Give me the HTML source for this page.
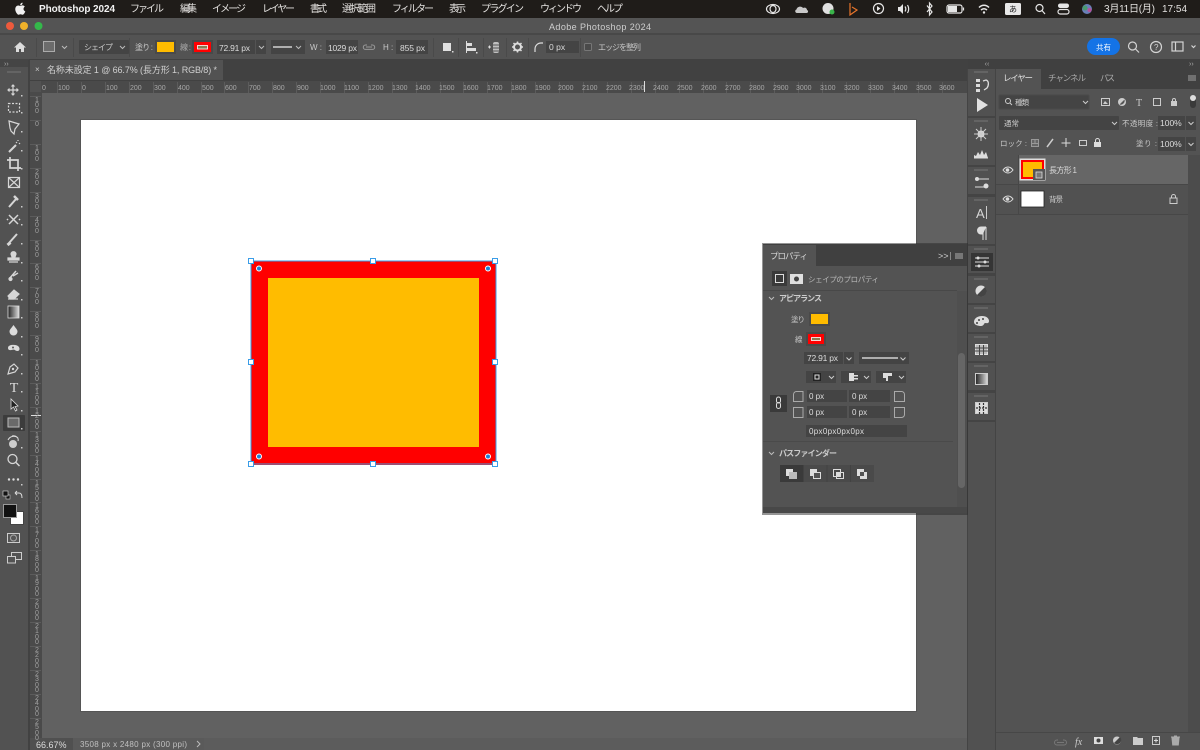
<!DOCTYPE html>
<html lang="ja"><head><meta charset="utf-8"><title>Adobe Photoshop 2024</title>
<style>
html,body{margin:0;padding:0;background:#535353}
body{width:1200px;height:750px;overflow:hidden;position:relative}
svg{position:absolute;left:0;top:0;display:block;filter:blur(.3px)}
text{font-family:"Liberation Sans","Noto Sans CJK JP",sans-serif;fill:#c8c8c8;font-size:8px}
.m text{fill:#e4e2e0;font-size:10px}
.r text{font-size:7px;fill:#a8a8a8}
.v{position:absolute;left:33px;width:8px;font:7px/5.4px "Liberation Sans",sans-serif;color:#a0a0a0;text-align:center;filter:blur(.3px)}
</style></head><body>
<svg width="1200" height="750" viewBox="0 0 1200 750" xmlns="http://www.w3.org/2000/svg">
<!-- base -->
<rect width="1200" height="750" fill="#535353"/>
<rect y="0" width="1200" height="18" fill="#1f1c19"/>
<rect y="18" width="1200" height="16" fill="#545454"/>
<rect y="33" width="1200" height="2" fill="#484848"/>
<rect y="35" width="1200" height="24" fill="#535353"/>
<rect y="59" width="968" height="22" fill="#414141"/>
<rect y="59" x="968" width="232" height="10" fill="#404040"/>
<rect x="0" y="59" width="29" height="8" fill="#454545"/>
<rect x="0" y="67" width="28" height="683" fill="#525252"/>
<rect x="7" y="71" width="14" height="2" fill="#646464"/>
<rect x="28" y="60" width="2" height="690" fill="#424242"/>
<!-- tab -->
<rect x="30" y="60" width="193" height="20" fill="#525252"/>
<text x="35" y="72" style="font-size:8px" fill="#aaa">×</text>
<text x="47" y="73" textLength="170" style="font-size:9px;fill:#d0d0d0">名称未設定 1 @ 66.7% (長方形 1, RGB/8) *</text>
<!-- rulers & canvas -->
<rect x="30" y="81" width="938" height="12" fill="#4a4a4a"/>
<rect x="30" y="81" width="12" height="657" fill="#4a4a4a"/>
<rect x="42" y="93" width="926" height="645" fill="#616161"/>
<rect x="30" y="81" width="11" height="11" fill="#525252"/>
<g stroke="#5c5c5c" stroke-width="1">
<path d="M57.5 82v11M81.5 82v11M105.5 82v11M129.5 82v11M153.5 82v11M177.5 82v11M201.5 82v11M224.5 82v11M248.5 82v11M272.5 82v11M296.5 82v11M320.5 82v11M344.5 82v11M368.5 82v11M392.5 82v11M416.5 82v11M440.5 82v11M463.5 82v11M487.5 82v11M511.5 82v11M535.5 82v11M559.5 82v11M583.5 82v11M607.5 82v11M631.5 82v11M655.5 82v11M679.5 82v11M703.5 82v11M726.5 82v11M750.5 82v11M774.5 82v11M798.5 82v11M822.5 82v11M846.5 82v11M870.5 82v11M894.5 82v11M918.5 82v11M942.5 82v11"/>
<path d="M30 96.5h11M30 120.5h11M30 144.5h11M30 168.5h11M30 192.5h11M30 216.5h11M30 240.5h11M30 263.5h11M30 287.5h11M30 311.5h11M30 335.5h11M30 359.5h11M30 383.5h11M30 407.5h11M30 431.5h11M30 455.5h11M30 479.5h11M30 502.5h11M30 526.5h11M30 550.5h11M30 574.5h11M30 598.5h11M30 622.5h11M30 646.5h11M30 670.5h11M30 694.5h11M30 718.5h11"/>
</g>
<g class="r">
<text x="42" y="90">0</text><text x="58" y="90">100</text><text x="82" y="90">0</text><text x="106" y="90">100</text><text x="130" y="90">200</text><text x="154" y="90">300</text><text x="178" y="90">400</text><text x="202" y="90">500</text><text x="225" y="90">600</text><text x="249" y="90">700</text><text x="273" y="90">800</text><text x="297" y="90">900</text><text x="320" y="90">1000</text><text x="344" y="90">1100</text><text x="368" y="90">1200</text><text x="392" y="90">1300</text><text x="415" y="90">1400</text><text x="439" y="90">1500</text><text x="463" y="90">1600</text><text x="487" y="90">1700</text><text x="511" y="90">1800</text><text x="535" y="90">1900</text><text x="558" y="90">2000</text><text x="582" y="90">2100</text><text x="606" y="90">2200</text><text x="629" y="90">2300</text><text x="653" y="90">2400</text><text x="677" y="90">2500</text><text x="701" y="90">2600</text><text x="725" y="90">2700</text><text x="749" y="90">2800</text><text x="773" y="90">2900</text><text x="796" y="90">3000</text><text x="820" y="90">3100</text><text x="844" y="90">3200</text><text x="868" y="90">3300</text><text x="892" y="90">3400</text><text x="916" y="90">3500</text><text x="939" y="90">3600</text>
</g>
<path d="M644.5 81v11" stroke="#ddd"/>
<path d="M31 415.5h10" stroke="#ddd"/>
<!-- document -->
<rect x="80" y="119" width="837" height="593" fill="#3f3f3f" opacity=".35"/>
<rect x="81" y="120" width="835" height="591" fill="#fff"/>
<rect x="251" y="261" width="245" height="204" fill="#ff0000"/>
<rect x="268" y="278" width="211" height="169" fill="#ffbc00"/>
<rect x="251" y="261" width="245" height="203" fill="none" stroke="#3a9de8" stroke-width="1"/>
<g fill="#fff" stroke="#3a9de8" stroke-width="1">
<rect x="248.500" y="258.500" width="5" height="5"/><rect x="370.500" y="258.500" width="5" height="5"/><rect x="492.500" y="258.500" width="5" height="5"/>
<rect x="248.500" y="359.500" width="5" height="5"/><rect x="492.500" y="359.500" width="5" height="5"/>
<rect x="248.500" y="461.500" width="5" height="5"/><rect x="370.500" y="461.500" width="5" height="5"/><rect x="492.500" y="461.500" width="5" height="5"/>
</g>
<g fill="#1c7fd8" stroke="#fff" stroke-width="1"><circle cx="259" cy="268.500" r="2.500"/><circle cx="488" cy="268.500" r="2.500"/><circle cx="259" cy="456.500" r="2.500"/><circle cx="488" cy="456.500" r="2.500"/></g>
<!-- status -->
<rect x="30" y="738" width="938" height="12" fill="#5c5c5c"/>
<rect x="30" y="738" width="43" height="12" fill="#505050"/>
<rect x="73" y="738" width="131" height="12" fill="#5a5a5a"/>
<text x="36" y="748" style="font-size:9px;fill:#dcdcdc">66.67%</text>
<text x="80" y="747" style="font-size:8px;fill:#c0c0c0" textLength="107">3508 px x 2480 px (300 ppi)</text>
<path d="M197 741l3 3-3 3" stroke="#bbb" fill="none"/>
<!-- menu bar -->
<path d="M23.500 8.900c0-1.500 1.200-2.200 1.300-2.300-.7-1-1.800-1.200-2.200-1.200-.9-.1-1.800.6-2.300.6s-1.200-.6-2-.5c-1 0-2 .6-2.500 1.500-1.100 1.900-.3 4.600.8 6.100.5.700 1.100 1.600 1.900 1.600s1.100-.5 2-.5 1.200.5 2 .5 1.400-.8 1.900-1.500c.6-.9.900-1.700.9-1.800-.1 0-1.800-.7-1.800-2.500zM22 4.500c.4-.5.700-1.200.6-1.900-.6 0-1.300.4-1.800.9-.4.400-.7 1.100-.6 1.800.7.100 1.400-.3 1.800-.8z" fill="#f0f0f0"/>
<g class="m">
<text x="39" y="12" style="font-weight:bold;font-size:10px;fill:#f2f2f2" textLength="76">Photoshop 2024</text>
<text x="130" y="12" textLength="34">ファイル</text>
<text x="180" y="12" textLength="17">編集</text>
<text x="212" y="12" textLength="34">イメージ</text>
<text x="262" y="12" textLength="33">レイヤー</text>
<text x="310" y="12" textLength="17">書式</text>
<text x="342" y="12" textLength="34">選択範囲</text>
<text x="392" y="12" textLength="42">フィルター</text>
<text x="449" y="12" textLength="17">表示</text>
<text x="481" y="12" textLength="43">プラグイン</text>
<text x="540" y="12" textLength="42">ウィンドウ</text>
<text x="597" y="12" textLength="26">ヘルプ</text>
<text x="1104" y="12" textLength="51">3月11日(月)</text>
<text x="1162" y="12" textLength="25">17:54</text>
</g>
<!-- status icons -->
<g fill="none" stroke="#e6e6e6" stroke-width="1.200">
<ellipse cx="773" cy="9" rx="6.500" ry="4.500"/><ellipse cx="773" cy="9" rx="3" ry="3.500"/>
<path d="M797 13c-2 0-2.500-3-.5-3.500.3-3 5-4 6.500-1.500 2-1 4 .3 4 2 1.500.5 1.500 3-.5 3z" fill="#c8c8c8" stroke="none"/>
<circle cx="828" cy="8.500" r="5.500" fill="#e0e0e0" stroke="none"/><circle cx="832" cy="12" r="2.500" fill="#3ab54a" stroke="none"/>
<path d="M850 3v12l7-5-5-3" stroke="#e8742a"/>
<circle cx="878.500" cy="8.500" r="5"/><path d="M877 6v5l3.500-2.500z" fill="#e6e6e6" stroke="none"/>
<path d="M898 7h2l3-3v10l-3-3h-2z" fill="#e6e6e6" stroke="none"/><path d="M905 6.500c1 1.500 1 3.500 0 5M907.500 5c1.500 2.500 1.500 5.500 0 8"/>
<path d="M927 5.500l5 6.500-2.500 3V3l2.500 3-5 6"/>
<rect x="947" y="5" width="15" height="8" rx="2"/><rect x="948" y="6" width="9" height="6" fill="#e6e6e6" stroke="none"/><path d="M963.500 7.500v3"/>
<path d="M979 7.500c3-3 7-3 10 0M981 10c2-1.700 4-1.700 6 0" stroke-width="1.500"/><circle cx="984" cy="12.500" r="1.200" fill="#e6e6e6" stroke="none"/>
<circle cx="1039.500" cy="8" r="3.500"/><path d="M1042 10.500l3 3.500"/>
<rect x="1058" y="3.500" width="11" height="4.500" rx="2.200" fill="#e6e6e6" stroke="none"/><rect x="1058" y="9.500" width="11" height="4.500" rx="2.200"/>
</g>
<rect x="1005" y="3" width="16" height="12" rx="1.500" fill="#e8e8e8"/>
<text x="1009" y="12" style="font-size:8px;fill:#222">あ</text>
<circle cx="1087" cy="9" r="5" fill="#6a7fb8"/><circle cx="1085" cy="8" r="2.500" fill="#4a9a70"/><circle cx="1089.500" cy="10" r="2" fill="#b8509a"/>
<!-- window -->
<circle cx="10" cy="26" r="4" fill="#ee5a3c"/><circle cx="24" cy="26" r="4" fill="#f0b22a"/><circle cx="38.500" cy="26" r="4" fill="#34b84a"/>
<text x="549" y="30" style="font-size:9px;fill:#cfcfcf" textLength="102">Adobe Photoshop 2024</text>
<!-- options bar -->
<path d="M36.500 38v19M73.500 38v19M129.500 38v19M433.500 38v19M458.500 38v19M483.500 38v19M506.500 38v19M528.500 38v19M580.500 38v19" stroke="#4a4a4a"/>
<path d="M14 47.500l6-5.500 6 5.500h-2v4.500h-3v-3h-2v3h-3v-4.500z" fill="#dcdcdc"/>
<rect x="43.500" y="41.500" width="11" height="10" fill="#6c6c6c" stroke="#ababab"/><path d="M62 46l2.500 2.500L67 46" stroke="#bbb" fill="none"/>
<rect x="79" y="40" width="50" height="14" rx="1" fill="#444"/><text x="84" y="50" textLength="29" style="font-size:8px">シェイプ</text><path d="M120 46l2.500 2.500L125 46" stroke="#bbb" fill="none"/>
<text x="135" y="50" textLength="18" style="font-size:8px">塗り :</text>
<rect x="155" y="40" width="21" height="14" fill="#494949"/><rect x="157" y="42" width="17" height="10" fill="#ffbc00"/>
<text x="180" y="50" textLength="11" style="font-size:8px;fill:#aaa">線 :</text>
<rect x="192" y="40" width="21" height="14" fill="#494949"/><rect x="194" y="42" width="17" height="10" fill="#f00"/><rect x="197.500" y="45.500" width="10" height="3.500" fill="#8a7a50" stroke="#fff" stroke-width=".8"/>
<rect x="217" y="40" width="38" height="14" fill="#444"/><rect x="256" y="40" width="10" height="14" fill="#444"/><text x="219" y="51" textLength="31" style="font-size:8.500px;fill:#dcdcdc">72.91 px</text><path d="M259 46l2.500 2.500 2.500-2.500" stroke="#bbb" fill="none"/>
<rect x="271" y="40" width="34" height="14" fill="#444"/><path d="M273 47h19" stroke="#eee" stroke-width="1.300"/><path d="M296 46l2.500 2.500 2.500-2.500" stroke="#bbb" fill="none"/>
<text x="310" y="50" style="font-size:8px">W :</text>
<rect x="326" y="40" width="32" height="14" fill="#444"/><text x="328" y="51" textLength="29" style="font-size:8.500px;fill:#dcdcdc">1029 px</text>
<path d="M367 45h-1.500a2.200 2.200 0 000 4.400H369M371 45h1.500a2.200 2.200 0 010 4.400H369M366 47h6" stroke="#999" fill="none"/>
<text x="383" y="50" style="font-size:8px">H :</text>
<rect x="396" y="40" width="32" height="14" fill="#444"/><text x="400" y="51" textLength="25" style="font-size:8.500px;fill:#dcdcdc">855 px</text>
<rect x="443" y="43" width="8" height="8" fill="#e0e0e0"/><rect x="452" y="51" width="1.500" height="1.500" fill="#ddd"/>
<path d="M466.500 41v12" stroke="#ddd"/><rect x="467" y="43" width="5" height="3" fill="#ddd"/><rect x="467" y="48" width="9" height="3" fill="#ddd"/><rect x="476" y="52" width="1.500" height="1.500" fill="#ddd"/>
<path d="M488 47h3M489.500 45.500v3" stroke="#ddd"/><rect x="493" y="42" width="6" height="11" rx="2" fill="#c0c0c0"/><path d="M492 45h8M492 48h8M492 51h8" stroke="#555"/>
<circle cx="517.500" cy="47" r="3.500" fill="none" stroke="#ddd" stroke-width="2"/><path d="M517.500 41.500v2M517.500 50.500v2M512 47h2M521 47h2M513.500 43l1.500 1.500M520 49.500l1.500 1.500M521.500 43L520 44.500M515 49.500L513.500 51" stroke="#ddd" stroke-width="1.500"/>
<path d="M535 52v-3a6 6 0 016-6h2" stroke="#ddd" fill="none" stroke-width="1.200"/>
<rect x="546" y="41" width="33" height="12" fill="#444"/><text x="549" y="50" style="font-size:8.500px;fill:#dcdcdc">0 px</text>
<rect x="584.500" y="43.500" width="7" height="7" rx="1" fill="#4a4a4a" stroke="#777"/>
<text x="598" y="50" textLength="43" style="font-size:8px">エッジを整列</text>
<rect x="1087" y="38" width="33" height="17" rx="8.500" fill="#1473e6"/>
<text x="1096" y="50" textLength="15" style="font-size:7.500px;fill:#fff">共有</text>
<g fill="none" stroke="#d4d4d4" stroke-width="1.200"><circle cx="1132.500" cy="46" r="4"/><path d="M1135.500 49l3.500 3.500"/><circle cx="1156" cy="47" r="5.500"/><rect x="1172" y="42" width="11" height="9"/><path d="M1175.500 42v9M1191.500 45.500l2 2 2-2"/></g>
<text x="1154" y="50" style="font-size:8px;fill:#d4d4d4">?</text>
<!-- collapse arrows -->
<text x="4" y="66" style="font-size:7px;fill:#aaa">››</text><text x="987" y="66" style="font-size:7px;fill:#aaa" text-anchor="middle">‹‹</text><text x="1189" y="66" style="font-size:7px;fill:#aaa">››</text>
<!-- left tools -->
<g fill="none" stroke="#d6d6d6" stroke-width="1.200">
<path d="M13 85v10M8 90h10M11.500 86.500l1.500-1.500 1.500 1.500M11.500 93.500l1.500 1.500 1.500-1.500M9.500 88.500L8 90l1.500 1.500M16.500 88.500L18 90l-1.500 1.500"/>
<rect x="8.500" y="103.500" width="11" height="8.500" stroke-dasharray="2 1.500"/>
<path d="M9 121l10 3-4 5-1 5-3-3-1-3z"/>
<path d="M9 152l7-7" stroke-width="2"/><path d="M16 142l1 1M19 144l1-1M18 140v1"/>
<path d="M10 157v11h11M7 160h11v11" stroke-width="1.700"/>
<rect x="8.500" y="177.500" width="11" height="10"/><path d="M8.500 177.500l11 10M19.500 177.500l-11 10"/>
<path d="M9 207l7-8" stroke-width="2"/><path d="M14 196l4 4" stroke-width="2.500"/>
<path d="M9 215l9 9M18 215l-9 9M8 220l-1-1M19 220l1-1" stroke-width="1.500"/>
<path d="M9 243l8-9" stroke-width="2"/><path d="M7.500 245l3-2.500" stroke-width="3"/>
<path d="M11 254c0-3 5-3 5 0l-1 3h-3zM8 258h11v2H8zM9 262h9" fill="#d6d6d6"/>
<path d="M9 279l7-8M13 276l5-3" stroke-width="1.500"/><circle cx="10.500" cy="279" r="1.500" fill="#d6d6d6"/>
<path d="M8 296l6-6 5 4-5 5H10z" fill="#d6d6d6"/><path d="M8 299h10"/>
</g>
<defs><linearGradient id="g" x1="0" x2="1" y1="0" y2="0"><stop offset="0" stop-color="#222"/><stop offset="1" stop-color="#ddd"/></linearGradient></defs>
<rect x="8" y="306" width="11" height="12" fill="url(#g)" stroke="#ddd" stroke-width=".8"/>
<path d="M13.500 325c2 3 4 4.500 4 6.500a4 4 0 01-8 0c0-2 2-3.500 4-6.500z" fill="#dcdcdc"/>
<path d="M8 348c0-3 4-3.500 7-3 3 .3 4.500 2 4.500 4 0 2-2 2.500-4 1.500-1-1-2-1-4-.5s-3.500 0-3.500-2z" fill="#dcdcdc"/><circle cx="13" cy="347.500" r="1" fill="#555"/>
<path d="M8 374l2-7 4-3 4 4-3 4z" fill="none" stroke="#d6d6d6" stroke-width="1.200"/><circle cx="13" cy="369" r="1.200" fill="#d6d6d6"/>
<text x="14" y="392" text-anchor="middle" style="font-family:'Liberation Serif',serif;font-size:14px;fill:#dcdcdc">T</text>
<path d="M11 399v10l2.500-2 2 4 1.500-1-2-3.500 3-.5z" fill="#222" stroke="#ddd" stroke-width=".8"/>
<rect x="3" y="415" width="22" height="16" rx="1" fill="#3c3c3c"/><rect x="8" y="418" width="11" height="9" fill="#6a6a6a" stroke="#bbb"/>
<circle cx="13" cy="444" r="4" fill="#ccc"/><path d="M8 440c2-4 7-5 10-2M12 436c4-1 7 2 6 5" stroke="#ddd" fill="none"/>
<circle cx="12.500" cy="459" r="4.500" fill="none" stroke="#d6d6d6" stroke-width="1.300"/><path d="M16 462.500l3.500 3.500" stroke="#d6d6d6" stroke-width="1.500"/>
<circle cx="9" cy="479.500" r="1.200" fill="#ddd"/><circle cx="13.500" cy="479.500" r="1.200" fill="#ddd"/><circle cx="18" cy="479.500" r="1.200" fill="#ddd"/>
<g fill="#ccc"><rect x="21" y="95" width="1.500" height="1.500"/><rect x="21" y="112" width="1.500" height="1.500"/><rect x="21" y="131" width="1.500" height="1.500"/><rect x="21" y="150" width="1.500" height="1.500"/><rect x="21" y="168" width="1.500" height="1.500"/><rect x="21" y="206" width="1.500" height="1.500"/><rect x="21" y="224" width="1.500" height="1.500"/><rect x="21" y="243" width="1.500" height="1.500"/><rect x="21" y="262" width="1.500" height="1.500"/><rect x="21" y="280" width="1.500" height="1.500"/><rect x="21" y="299" width="1.500" height="1.500"/><rect x="21" y="317" width="1.500" height="1.500"/><rect x="21" y="336" width="1.500" height="1.500"/><rect x="21" y="354" width="1.500" height="1.500"/><rect x="21" y="373" width="1.500" height="1.500"/><rect x="21" y="391" width="1.500" height="1.500"/><rect x="21" y="410" width="1.500" height="1.500"/><rect x="21" y="428" width="1.500" height="1.500"/><rect x="21" y="447" width="1.500" height="1.500"/><rect x="21" y="484" width="1.500" height="1.500"/></g>
<!-- colours -->
<rect x="6" y="495" width="4" height="4" fill="#111" stroke="#ccc" stroke-width=".6"/><rect x="3" y="491" width="5" height="5" fill="#111" stroke="#ddd" stroke-width=".6"/>
<path d="M16 493l3 0c2 0 3 2 3 5M15 493l2-2M15 493l2 2" stroke="#ddd" fill="none"/>
<rect x="10.500" y="511.500" width="13" height="13" fill="#fff" stroke="#444"/>
<rect x="3.500" y="504.500" width="13" height="13" fill="#111" stroke="#999"/>
<rect x="7.500" y="533.500" width="12" height="9" fill="#555" stroke="#ccc"/><ellipse cx="13.500" cy="538" rx="3" ry="3" fill="none" stroke="#aaa"/>
<rect x="11.500" y="552.500" width="10" height="7" fill="#535353" stroke="#ccc"/><rect x="7.500" y="556.500" width="8" height="6.500" fill="#535353" stroke="#ccc"/>
<!-- right icon strip -->
<rect x="967" y="69" width="29" height="681" fill="#444"/>
<g fill="#515151">
<rect x="968" y="69" width="27" height="47"/><rect x="968" y="118" width="27" height="47"/><rect x="968" y="167" width="27" height="27"/><rect x="968" y="197" width="27" height="47"/><rect x="968" y="246" width="27" height="27"/><rect x="968" y="276" width="27" height="27"/><rect x="968" y="305" width="27" height="27"/><rect x="968" y="334" width="27" height="27"/><rect x="968" y="363" width="27" height="27"/><rect x="968" y="393" width="27" height="27"/><rect x="968" y="422" width="27" height="328"/>
</g>
<g fill="#646464"><rect x="974" y="71" width="14" height="2"/><rect x="974" y="120" width="14" height="2"/><rect x="974" y="169" width="14" height="2"/><rect x="974" y="199" width="14" height="2"/><rect x="974" y="248" width="14" height="2"/><rect x="974" y="278" width="14" height="2"/><rect x="974" y="307" width="14" height="2"/><rect x="974" y="336" width="14" height="2"/><rect x="974" y="365" width="14" height="2"/><rect x="974" y="395" width="14" height="2"/></g>
<g fill="#dcdcdc"><rect x="976" y="79" width="4" height="3"/><rect x="976" y="84" width="4" height="3"/><rect x="976" y="89" width="4" height="3"/></g>
<path d="M983 81l3-1c3 1 3 5 1 8l-3 2" stroke="#ddd" fill="none" stroke-width="1.300"/>
<path d="M977 98l11 7-11 7z" fill="#e2e2e2"/>
<circle cx="981" cy="134" r="3.500" fill="#ddd"/><path d="M981 127v14M974 134h14M976 129l10 10M986 129l-10 10" stroke="#ccc" fill="none"/>
<path d="M974 158v-3l2 1 2-4 2 3 2-5 2 5 2-3 2 6z" fill="#ddd"/><path d="M974 158h14" stroke="#ddd"/>
<path d="M975 179h14M975 187h9" stroke="#ddd" fill="none"/><circle cx="977" cy="179" r="2" fill="#ddd"/><circle cx="986" cy="186" r="2.500" fill="#ddd"/>
<text x="976" y="218" style="font-size:13px;fill:#d6d6d6">A</text><path d="M986.500 206v13" stroke="#ccc"/>
<path d="M983 227v13M986 227v13M986 227h-5a3 3 0 000 7h2" stroke="#ddd" fill="#ddd"/>
<rect x="971" y="253" width="22" height="18" fill="#353535"/>
<g stroke="#ddd" fill="none"><path d="M975 258h14M975 262h14M975 266h14"/></g><circle cx="978" cy="258" r="1.500" fill="#ddd"/><circle cx="985" cy="262" r="1.500" fill="#ddd"/><circle cx="979" cy="266" r="1.500" fill="#ddd"/>
<circle cx="981" cy="291" r="5.500" fill="#ddd"/><path d="M977 295l8-8a5.500 5.500 0 01-8 8z" fill="#444"/>
<path d="M974 322c0-4 4-6 8-6s7 2 7 5-3 2-4 2-1 3-4 3-7-1-7-4z" fill="#ddd"/><circle cx="979" cy="320" r="1" fill="#444"/><circle cx="983" cy="319" r="1" fill="#444"/><circle cx="977" cy="323" r="1" fill="#444"/>
<rect x="975.500" y="344.500" width="12" height="10" fill="#bbb" stroke="#ddd"/><path d="M975 348h13M975 351h13M979.500 345v10M983.500 345v10" stroke="#444" fill="none"/>
<rect x="975.500" y="373.500" width="12" height="11" fill="url(#g)" stroke="#ccc"/>
<rect x="975.500" y="402.500" width="12" height="11" fill="#ddd" stroke="#ccc"/><path d="M979.500 403v11M983.500 403v11M976 408h11" stroke="#333" stroke-width="1.200" stroke-dasharray="2 1" fill="none"/>
<!-- layers panel -->
<rect x="996" y="69" width="204" height="20" fill="#404040"/>
<rect x="996" y="69" width="45" height="20" fill="#535353"/>
<text x="1003" y="81" textLength="30" style="font-size:8.500px;fill:#e0e0e0">レイヤー</text>
<text x="1048" y="81" textLength="38" style="font-size:8.500px;fill:#a8a8a8">チャンネル</text>
<text x="1100" y="81" textLength="15" style="font-size:8.500px;fill:#a8a8a8">パス</text>
<rect x="1188" y="75" width="8" height="6" fill="#707070"/>
<rect x="999" y="95" width="90" height="14" rx="1" fill="#444" stroke="#4a4a4a"/>
<circle cx="1008" cy="101" r="2.500" fill="none" stroke="#ccc"/><path d="M1010 103l2 2M1083 101l2.500 2.500 2.500-2.500" stroke="#ccc" fill="none"/>
<text x="1015" y="105" textLength="14" style="font-size:7.500px;fill:#ccc">種類</text>
<rect x="1101.500" y="98.500" width="8" height="7" fill="none" stroke="#ccc"/><path d="M1103 104l2-3 3 3" fill="#ccc"/>
<circle cx="1122" cy="102" r="4" fill="#ccc"/><path d="M1119.500 104.500l5-5a4 4 0 01-5 5z" fill="#555"/>
<text x="1139" y="106" text-anchor="middle" style="font-size:10px;font-family:'Liberation Serif',serif;fill:#ccc">T</text>
<rect x="1153.500" y="98.500" width="7" height="7" fill="none" stroke="#ccc"/><rect x="1171" y="101" width="6" height="5" fill="#ccc"/><path d="M1172.500 101v-1a1.500 1.500 0 013 0v1" stroke="#ccc" fill="none"/>
<rect x="1190" y="97" width="6" height="11" rx="3" fill="#3a3a3a"/><circle cx="1193" cy="98" r="3" fill="#ddd"/>
<rect x="999" y="116" width="120" height="14" rx="1" fill="#444"/><text x="1004" y="126" textLength="15" style="font-size:7.500px;fill:#ccc">通常</text><path d="M1112 122l2.500 2.500 2.500-2.500" stroke="#ccc" fill="none"/>
<text x="1122" y="126" textLength="36" style="font-size:7.500px">不透明度 :</text>
<rect x="1158" y="116" width="27" height="14" fill="#444"/><rect x="1186" y="116" width="10" height="14" fill="#444"/><text x="1160" y="126" style="font-size:8.500px;fill:#ddd">100%</text><path d="M1188.500 122l2.500 2.500 2.500-2.500" stroke="#ccc" fill="none"/>
<text x="1000" y="146" textLength="27" style="font-size:7.500px">ロック :</text>
<rect x="1031.500" y="139.500" width="7" height="7" fill="#666" stroke="#999"/><path d="M1035 140v3.500h-3.500M1035 143.500h3.500v3" stroke="#999" fill="none"/>
<path d="M1047 147l6-8" stroke="#ccc" stroke-width="1.500"/>
<path d="M1066 138v9M1061.500 143h9" stroke="#ddd"/><rect x="1079.500" y="140.500" width="7" height="5" fill="none" stroke="#ccc"/>
<rect x="1094" y="142" width="7" height="5" fill="#ddd"/><path d="M1095.500 142v-1.500a2 2 0 014 0V142" stroke="#ddd" fill="none"/>
<text x="1136" y="146" textLength="21" style="font-size:7.500px">塗り :</text>
<rect x="1158" y="137" width="27" height="14" fill="#444"/><rect x="1186" y="137" width="10" height="14" fill="#444"/><text x="1160" y="147" style="font-size:8.500px;fill:#ddd">100%</text><path d="M1188.500 143l2.500 2.500 2.500-2.500" stroke="#ccc" fill="none"/>
<!-- layers -->
<rect x="1188" y="155" width="12" height="578" fill="#4c4c4c"/>
<rect x="996" y="155" width="192" height="29" fill="#535353"/>
<rect x="1019" y="155" width="169" height="29" fill="#666"/>
<rect x="996" y="185" width="192" height="29" fill="#515151"/>
<path d="M996 184.500h192M996 214.500h192M1018.500 155v59" stroke="#474747"/>
<path d="M1003 170c3-4 7-4 10 0-3 4-7 4-10 0z" fill="none" stroke="#ddd"/><circle cx="1007.500" cy="170" r="1.800" fill="#ddd"/>
<path d="M1003 199c3-4 7-4 10 0-3 4-7 4-10 0z" fill="none" stroke="#ddd"/><circle cx="1007.500" cy="199" r="1.800" fill="#ddd"/>
<rect x="1019.500" y="158.500" width="26" height="22" fill="#ddd"/><rect x="1021" y="160" width="23" height="19" fill="#f00"/><rect x="1023" y="162" width="19" height="15" fill="#ffbc00"/>
<rect x="1033" y="169" width="12" height="11" fill="#555"/><rect x="1036" y="172" width="6" height="6" fill="#777" stroke="#ddd" stroke-width=".8"/>
<rect x="1021" y="191" width="23" height="16" fill="#fff" stroke="#222" stroke-width=".8"/>
<text x="1049" y="173" textLength="28" style="font-size:8px;fill:#d8d8d8">長方形 1</text>
<text x="1049" y="202" textLength="14" style="font-size:7.500px;fill:#d0d0d0">背景</text>
<rect x="1170" y="198" width="7" height="5.500" fill="none" stroke="#ccc"/><path d="M1171.500 198v-1.500a2 2 0 014 0v1.500" stroke="#ccc" fill="none"/>
<!-- bottom bar -->
<rect x="996" y="733" width="204" height="17" fill="#535353"/>
<path d="M996 732.500h204" stroke="#474747"/>
<path d="M1058 740h-1a2.500 2.500 0 000 5h4M1063 740h1a2.500 2.500 0 010 5h-3M1057 742.500h7" stroke="#777" fill="none"/>
<text x="1075" y="745" style="font-size:10px;font-style:italic;font-family:'Liberation Serif',serif;fill:#ccc">fx</text>
<rect x="1094" y="737" width="9" height="7" fill="#ddd"/><circle cx="1098.500" cy="740.500" r="2" fill="#444"/>
<circle cx="1117" cy="740.500" r="4" fill="#ccc"/><path d="M1114 743l6-6a4 4 0 01-6 6z" fill="#444"/>
<path d="M1133 737h4l1 1h5v7h-10z" fill="#ccc"/>
<rect x="1152.500" y="736.500" width="7" height="8" fill="none" stroke="#ccc"/><path d="M1154 740.500h4M1156 738.500v4" stroke="#ddd"/>
<path d="M1172 738h7l-.7 7h-5.600zM1171 737h9M1174 736h3" stroke="#aaa" fill="#aaa"/>
<!-- properties panel -->
<rect x="762" y="243" width="206" height="272" fill="#2c2c2c" opacity=".5"/>
<rect x="763" y="244" width="204" height="269" fill="#535353"/>
<rect x="763" y="244" width="204" height="22" fill="#404040"/>
<rect x="763" y="245" width="53" height="21" fill="#535353"/>
<text x="770" y="259" textLength="38" style="font-size:8.500px;fill:#d8d8d8">プロパティ</text>
<text x="938" y="259" style="font-size:9px;fill:#ccc">&gt;&gt;</text><path d="M950.500 252v8" stroke="#888"/><rect x="955" y="253" width="8" height="6" fill="#777"/>
<rect x="772" y="271" width="15" height="15" fill="#3a3a3a"/><rect x="775.500" y="274.500" width="8" height="8" fill="none" stroke="#ddd"/>
<rect x="790" y="274" width="13" height="10" fill="#e0e0e0"/><circle cx="796.500" cy="279" r="2.500" fill="#444"/>
<text x="808" y="282" textLength="71" style="font-size:7.500px;fill:#b8b8b8">シェイプのプロパティ</text>
<path d="M763 290.500h194" stroke="#484848"/>
<path d="M769 297l2.500 2.500L774 297M769 452l2.500 2.500L774 452" stroke="#bbb" fill="none"/>
<text x="779" y="301" textLength="43" style="font-size:8px;font-weight:bold;fill:#ccc">アピアランス</text>
<text x="791" y="322" textLength="14" style="font-size:7.500px">塗り</text>
<rect x="809" y="312" width="21" height="14" fill="#4a4a4a"/><rect x="811" y="314" width="17" height="10" fill="#ffbc00"/>
<text x="795" y="342" style="font-size:7.500px">線</text>
<rect x="806" y="332" width="20" height="14" fill="#4a4a4a"/><rect x="808" y="334" width="16" height="10" fill="#f00"/><rect x="811.500" y="337.500" width="9" height="3" fill="#8a7a50" stroke="#fff" stroke-width=".8"/>
<g fill="#444"><rect x="804" y="352" width="39" height="12"/><rect x="844" y="352" width="10" height="12"/><rect x="859" y="352" width="50" height="12"/><rect x="806" y="371" width="30" height="12"/><rect x="841" y="371" width="30" height="12"/><rect x="876" y="371" width="30" height="12"/><rect x="807" y="390" width="40" height="12"/><rect x="849" y="390" width="41" height="12"/><rect x="807" y="406" width="40" height="12"/><rect x="849" y="406" width="41" height="12"/><rect x="806" y="425" width="101" height="12"/></g>
<text x="807" y="361" textLength="31" style="font-size:8.500px;fill:#dcdcdc">72.91 px</text>
<path d="M862 358h36" stroke="#eee" stroke-width="1.300"/>
<g stroke="#ccc" fill="none"><path d="M846.500 357.500l2.500 2.500 2.500-2.500M900.500 357.500l2.500 2.500 2.500-2.500M829 376l2.500 2.500 2.500-2.500M864 376l2.500 2.500 2.500-2.500M899 376l2.500 2.500 2.500-2.500"/></g>
<rect x="813" y="373" width="8" height="8" fill="#222"/><rect x="815" y="375" width="4" height="4" fill="none" stroke="#ddd"/>
<path d="M849 373h5v8h-5zM854 375h4v1.500h-4zM854 378h4v1.500h-4z" fill="#ddd"/>
<path d="M883 373h9v3h-4v5h-2v-3h-3z" fill="#ddd"/>
<rect x="770" y="395" width="17" height="17" fill="#3a3a3a"/><path d="M776.500 399.500a2 2 0 014 0v2a2 2 0 01-4 0zM776.500 405a2 2 0 014 0v2a2 2 0 01-4 0z" stroke="#ddd" fill="none" transform="translate(0,-.500)"/>
<g fill="none" stroke="#aaa"><path d="M793.500 401.500v-7a3 3 0 013-3h6.500v10zM793.500 417.500v-10h9.500v10z"/><path d="M894.500 391.500h7a3 3 0 013 3v7h-10zM894.500 407.500h10v7a3 3 0 01-3 3h-7z"/></g>
<text x="809" y="399" style="font-size:8px;fill:#ddd">0 px</text><text x="852" y="399" style="font-size:8px;fill:#ddd">0 px</text><text x="809" y="415" style="font-size:8px;fill:#ddd">0 px</text><text x="852" y="415" style="font-size:8px;fill:#ddd">0 px</text>
<text x="809" y="434" textLength="55" style="font-size:8px;fill:#ddd">0px0px0px0px</text>
<path d="M763 441.500h190" stroke="#4a4a4a"/>
<text x="779" y="456" textLength="58" style="font-size:8px;font-weight:bold;fill:#ccc">パスファインダー</text>
<rect x="780" y="465" width="94" height="17" fill="#4a4a4a"/>
<rect x="780" y="465" width="23" height="17" fill="#3a3a3a"/>
<path d="M803.500 465v17M827 465v17M850.500 465v17" stroke="#424242"/>
<rect x="786" y="469" width="7" height="7" fill="#ddd"/><rect x="789" y="472" width="8" height="7" fill="#bbb"/>
<rect x="810" y="469" width="7" height="7" fill="#ddd"/><rect x="813.500" y="472.500" width="7" height="6" fill="#535353" stroke="#ddd"/>
<rect x="833.500" y="469.500" width="7" height="7" fill="none" stroke="#ddd"/><rect x="836.500" y="472.500" width="7" height="6" fill="none" stroke="#ddd"/><rect x="837" y="473" width="3.500" height="3.500" fill="#ddd"/>
<rect x="857" y="469" width="7" height="7" fill="#ddd"/><rect x="860" y="472" width="7" height="7" fill="#ddd"/><rect x="860" y="472" width="4" height="4" fill="#535353"/>
<rect x="957" y="291" width="10" height="216" fill="#4f4f4f"/>
<rect x="958" y="353" width="7" height="135" rx="3.500" fill="#666"/>
<rect x="763" y="507" width="204" height="6" fill="#484848"/>
</svg>
<div class="v" style="top:98px">1<br>0<br>0</div>
<div class="v" style="top:122px">0</div>
<div class="v" style="top:146px">1<br>0<br>0</div>
<div class="v" style="top:170px">2<br>0<br>0</div>
<div class="v" style="top:194px">3<br>0<br>0</div>
<div class="v" style="top:218px">4<br>0<br>0</div>
<div class="v" style="top:242px">5<br>0<br>0</div>
<div class="v" style="top:265px">6<br>0<br>0</div>
<div class="v" style="top:289px">7<br>0<br>0</div>
<div class="v" style="top:313px">8<br>0<br>0</div>
<div class="v" style="top:337px">9<br>0<br>0</div>
<div class="v" style="top:361px">1<br>0<br>0<br>0</div>
<div class="v" style="top:385px">1<br>1<br>0<br>0</div>
<div class="v" style="top:409px">1<br>2<br>0<br>0</div>
<div class="v" style="top:433px">1<br>3<br>0<br>0</div>
<div class="v" style="top:457px">1<br>4<br>0<br>0</div>
<div class="v" style="top:481px">1<br>5<br>0<br>0</div>
<div class="v" style="top:504px">1<br>6<br>0<br>0</div>
<div class="v" style="top:528px">1<br>7<br>0<br>0</div>
<div class="v" style="top:552px">1<br>8<br>0<br>0</div>
<div class="v" style="top:576px">1<br>9<br>0<br>0</div>
<div class="v" style="top:600px">2<br>0<br>0<br>0</div>
<div class="v" style="top:624px">2<br>1<br>0<br>0</div>
<div class="v" style="top:648px">2<br>2<br>0<br>0</div>
<div class="v" style="top:672px">2<br>3<br>0<br>0</div>
<div class="v" style="top:696px">2<br>4<br>0<br>0</div>
<div class="v" style="top:720px">2<br>5<br>0<br>0</div>
</body></html>
